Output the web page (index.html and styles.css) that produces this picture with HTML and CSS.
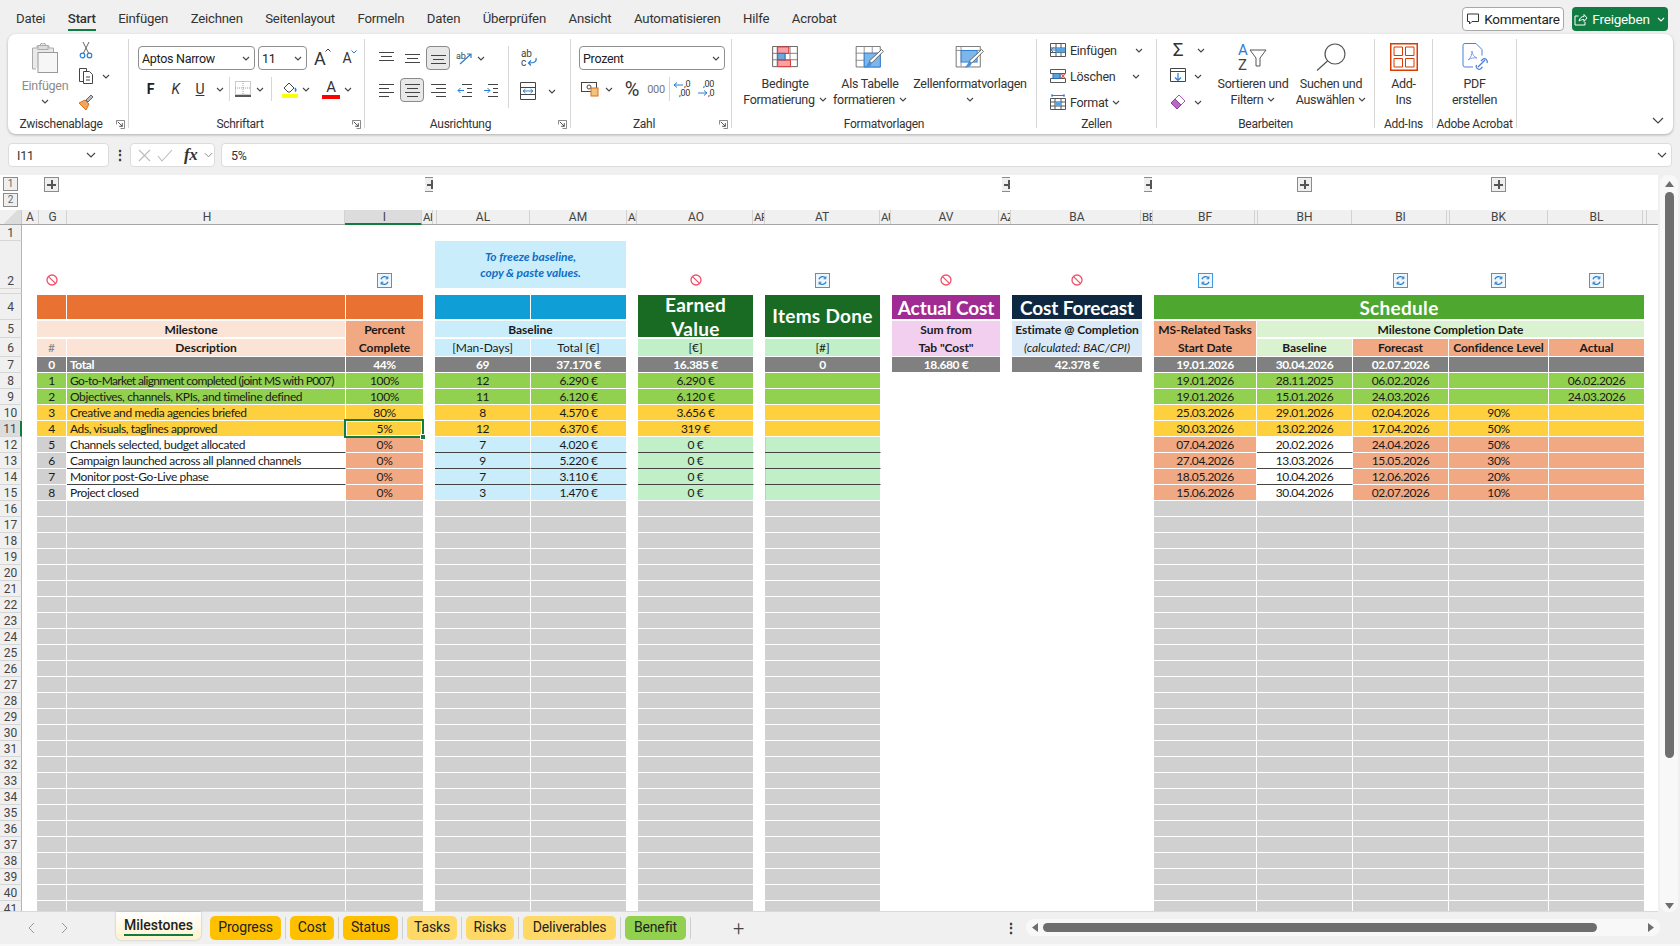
FILE: index.html
```html
<!DOCTYPE html>
<html lang="de">
<head>
    <meta charset="UTF-8">
    <title>Milestones - Excel</title>
    <link rel="stylesheet" href="styles.css">
</head>
<body>
    <svg class="defs" width="0" height="0">
        <symbol id="chev" viewBox="0 0 8 5"><path d="M1 1l3 3 3-3" fill="none" stroke="#444" stroke-width="1.1"/></symbol>
        <symbol id="ban" viewBox="0 0 12 12"><circle cx="6" cy="6" r="5" fill="#fff" stroke="#f0506a" stroke-width="1.3"/><path d="M2.6 2.6l6.8 6.8" stroke="#f0506a" stroke-width="1.3"/></symbol>
        <symbol id="sync" viewBox="0 0 15 15"><rect x=".5" y=".5" width="14" height="14" fill="#eef6fd" stroke="#3a9ae6"/><path d="M4 6.2A3.8 3.8 0 0 1 10.6 5M11 8.8A3.8 3.8 0 0 1 4.4 10" fill="none" stroke="#2f7fc4" stroke-width="1.3"/><path d="M10.9 3.4v2.4H8.6M4.1 11.6V9.2h2.3" fill="none" stroke="#2f7fc4"/></symbol>
        <symbol id="launch" viewBox="0 0 10 10"><path d="M.5 5V.5H9.5V9.5H5" fill="none" stroke="#777"/><path d="M2 2l5 5M7 3.5V7H3.5" fill="none" stroke="#444"/></symbol>
    </svg>

    <!-- Menue -->
    <header class="menubar">
        <nav class="menu">
            <span>Datei</span>
            <span class="current">Start</span>
            <span>Einfügen</span>
            <span>Zeichnen</span>
            <span>Seitenlayout</span>
            <span>Formeln</span>
            <span>Daten</span>
            <span>Überprüfen</span>
            <span>Ansicht</span>
            <span>Automatisieren</span>
            <span>Hilfe</span>
            <span>Acrobat</span>
        </nav>
        <button class="btn-comment">
            <svg width="14" height="14" viewBox="0 0 14 14"><path d="M1.5 2h11v7.5H6L3.5 12V9.5h-2z" fill="none" stroke="#333"/></svg>
            Kommentare
        </button>
        <button class="btn-share">
            <svg width="15" height="15" viewBox="0 0 15 15"><path d="M5.5 4H2v9h10v-3M6 9c.5-3 2.5-4.5 5-4.5V2.500l3 3.500-3 3.500V7.500C9 7.500 7.500 8 6 9z" fill="none" stroke="#fff"/></svg>
            Freigeben
            <svg class="chev" width="8" height="5"><use href="#chev"/></svg>
        </button>
    </header>

    <!-- Ribbon -->
    <section class="ribbon">
        <div class="group g-clip">
            <div class="group-body">
                <div class="paste">
                    <svg width="28" height="30" viewBox="0 0 28 30"><path d="M5 26H1.500V5H6V3h3a3 3 0 0 1 6 0h3v2h4.500v4" fill="#e9e9e9" stroke="#aaa"/><rect x="7" y="9.500" width="19.500" height="20" fill="#f6f6f6" stroke="#999"/><rect x="7" y="2.500" width="10" height="4" fill="#ddd" stroke="#aaa"/></svg>
                    <span class="muted">Einfügen</span>
                    <svg class="chev-under" width="8" height="5"><use href="#chev"/></svg>
                </div>
                <div class="stack">
                    <div class="stack-row">
                        <svg width="16" height="18" viewBox="0 0 16 18"><path d="M5 1l5.500 11M11 1L5.500 12" stroke="#666" fill="none"/><circle cx="4.500" cy="14.500" r="2.300" fill="none" stroke="#2b7cd3" stroke-width="1.200"/><circle cx="11.500" cy="14.500" r="2.300" fill="none" stroke="#2b7cd3" stroke-width="1.200"/></svg>
                    </div>
                    <div class="stack-row">
                        <svg width="16" height="18" viewBox="0 0 16 18"><path d="M5 14.500H1.500V1.500h7V4" fill="none" stroke="#444"/><path d="M5.500 4.500h6l3 3v9h-9z" fill="#fff" stroke="#444"/><path d="M8 10h4M8 13h4" stroke="#444"/></svg>
                        <svg class="chev" width="8" height="5"><use href="#chev"/></svg>
                    </div>
                    <div class="stack-row">
                        <svg width="17" height="18" viewBox="0 0 17 18"><path d="M1 10l6-3 4 4-3 6z" fill="#f2a65a" stroke="#d9701c"/><path d="M8 7l5-5 2 2-5 5z" fill="#bbb" stroke="#666"/></svg>
                    </div>
                </div>
            </div>
            <div class="group-label"><i></i><span>Zwischenablage</span><svg class="launcher" width="9" height="9"><use href="#launch"/></svg></div>
        </div>

        <div class="group g-font">
            <div class="group-body column">
                <div class="tool-row">
                    <div class="combo combo-font">Aptos Narrow<svg width="8" height="5"><use href="#chev"/></svg></div>
                    <div class="combo combo-size">11<svg width="8" height="5"><use href="#chev"/></svg></div>
                    <span class="grow">A<svg width="6" height="4" viewBox="0 0 6 4"><path d="M.5 3.500L3 1l2.500 2.500" fill="none" stroke="#444"/></svg></span>
                    <span class="shrink">A<svg width="6" height="4" viewBox="0 0 6 4"><path d="M.5.500L3 3 5.500.500" fill="none" stroke="#2b7cd3"/></svg></span>
                </div>
                <div class="tool-row row-two">
                    <span class="tb w25 t-bold">F</span>
                    <span class="tb w25 t-ital">K</span>
                    <span class="tb w24 t-under">U</span>
                    <svg class="chev" width="8" height="5"><use href="#chev"/></svg>
                    <i class="vsep v1"></i>
                    <span class="tb w18"><svg width="16" height="16" viewBox="0 0 16 16"><path d="M.5.500h15v13H.5z" fill="none" stroke="#999" stroke-dasharray="1 1"/><path d="M8 0v14M0 7h16" stroke="#999" stroke-dasharray="1 1"/><path d="M0 15h16" stroke="#222" stroke-width="1.500"/></svg></span>
                    <svg class="chev" width="8" height="5"><use href="#chev"/></svg>
                    <i class="vsep v2"></i>
                    <span class="tb w16"><svg width="16" height="18" viewBox="0 0 16 18"><path d="M2 8l5-5 5 5-4 4H6z" fill="#fff" stroke="#444"/><path d="M13 8c1 1.500 1.500 2.500 0 3.500" fill="none" stroke="#2b7cd3" stroke-width="1.500"/><rect y="14" width="16" height="4" fill="#ffff00"/></svg></span>
                    <svg class="chev" width="8" height="5"><use href="#chev"/></svg>
                    <span class="tb w18 fcolor">A</span>
                    <svg class="chev" width="8" height="5"><use href="#chev"/></svg>
                </div>
            </div>
            <div class="group-label"><i></i><span>Schriftart</span><svg class="launcher" width="9" height="9"><use href="#launch"/></svg></div>
        </div>

        <div class="group g-align">
            <div class="group-body">
                <div class="align-block">
                    <div class="tool-row">
                        <span class="tb al"><svg width="15" height="12" viewBox="0 0 15 12"><path d="M0 .5h15M2 4.500h11M0 8.500h15" stroke="#444"/></svg></span>
                        <span class="tb al"><svg width="15" height="12" viewBox="0 0 15 12"><path d="M0 2.500h15M2 6.500h11M0 10.500h15" stroke="#444"/></svg></span>
                        <span class="tb al active"><svg width="15" height="12" viewBox="0 0 15 12"><path d="M0 3.500h15M2 7.500h11M0 11.500h15" stroke="#444"/></svg></span>
                        <span class="tb al"><svg width="18" height="16" viewBox="0 0 18 16"><path d="M5 14L16 4M12 4h4v4" fill="none" stroke="#2b7cd3" stroke-width="1.200"/><text x="1" y="9" class="svg-t rot">ab</text></svg></span>
                        <svg class="chev tight" width="8" height="5"><use href="#chev"/></svg>
                    </div>
                    <div class="tool-row row-two2">
                        <span class="tb al"><svg width="15" height="14" viewBox="0 0 15 14"><path d="M0 1.500h15M0 5.500h10M0 9.500h15M0 13.500h10" stroke="#444"/></svg></span>
                        <span class="tb al active"><svg width="15" height="14" viewBox="0 0 15 14"><path d="M0 1.500h15M2 5.500h11M0 9.500h15M2 13.500h11" stroke="#444"/></svg></span>
                        <span class="tb al"><svg width="15" height="14" viewBox="0 0 15 14"><path d="M0 1.500h15M5 5.500h10M0 9.500h15M5 13.500h10" stroke="#444"/></svg></span>
                        <span class="tb al"><svg width="15" height="14" viewBox="0 0 15 14"><path d="M5 1.500h10M10 5.500h5M10 9.500h5M5 13.500h10" stroke="#444"/><path d="M7 7.500H1M3.500 5L1 7.500 3.500 10" fill="none" stroke="#2b7cd3"/></svg></span>
                        <span class="tb al"><svg width="15" height="14" viewBox="0 0 15 14"><path d="M5 1.500h10M10 5.500h5M10 9.500h5M5 13.500h10" stroke="#444"/><path d="M1 7.500h6M4.500 5L7 7.500 4.500 10" fill="none" stroke="#2b7cd3"/></svg></span>
                    </div>
                </div>
                <i class="vsep v3"></i>
                <div class="wrap-block">
                    <svg width="18" height="18" viewBox="0 0 18 18"><text x="1" y="8" class="svg-t">ab</text><text x="1" y="17" class="svg-t">c</text><path d="M16 9c1 4-2 5-7 5M11 11.500L8.500 14l2.500 2.500" fill="none" stroke="#2b7cd3" stroke-width="1.200"/></svg>
                    <div class="merge">
                        <svg width="16" height="18" viewBox="0 0 16 18"><path d="M.5.500h15v17H.5zM0 5.500h16M0 12.500h16" fill="none" stroke="#444"/><path d="M3 9h10M5.500 7L3 9l2.500 2M10.500 7L13 9l-2.500 2" fill="none" stroke="#2b7cd3"/></svg>
                        <svg class="chev" width="8" height="5"><use href="#chev"/></svg>
                    </div>
                </div>
            </div>
            <div class="group-label"><i></i><span>Ausrichtung</span><svg class="launcher" width="9" height="9"><use href="#launch"/></svg></div>
        </div>

        <div class="group g-num">
            <div class="group-body column">
                <div class="tool-row">
                    <div class="combo combo-num">Prozent<svg width="8" height="5"><use href="#chev"/></svg></div>
                </div>
                <div class="tool-row row-two">
                    <span class="tb w22"><svg width="18" height="16" viewBox="0 0 18 16"><rect x=".5" y="1.500" width="15" height="9" fill="#fff" stroke="#444"/><circle cx="8" cy="6" r="2" fill="none" stroke="#444"/><rect x="10" y="7" width="7" height="8" fill="#f4c27a" stroke="#d9701c"/></svg></span>
                    <svg class="chev" width="8" height="5"><use href="#chev"/></svg>
                    <span class="tb w24 pct">%</span>
                    <span class="tb w24 thou">000</span>
                    <i class="vsep v4"></i>
                    <span class="tb w24"><svg width="20" height="18" viewBox="0 0 20 18"><text x="11" y="7" class="svg-s">,0</text><text x="6" y="16" class="svg-s">,00</text><path d="M10 5H1M4 2.500L1 5l3 2.500" fill="none" stroke="#2b7cd3"/></svg></span>
                    <span class="tb w24"><svg width="20" height="18" viewBox="0 0 20 18"><text x="6" y="7" class="svg-s">,00</text><text x="11" y="16" class="svg-s">,0</text><path d="M1 13h9M7 10.500l3 2.500-3 2.500" fill="none" stroke="#2b7cd3"/></svg></span>
                </div>
            </div>
            <div class="group-label"><i></i><span>Zahl</span><svg class="launcher" width="9" height="9"><use href="#launch"/></svg></div>
        </div>

        <div class="group g-styles">
            <div class="group-body">
                <div class="big w90">
                    <svg class="big-icon cond" width="28" height="24" viewBox="0 0 28 24"><path d="M.5.500h27v22H.5z" fill="#fff" stroke="#555"/><path d="M5.500 0v23M19.500 0v23M.5 8h27M.5 15h27M14 0v23" stroke="#777"/><path d="M6 1h12v7H6zM6 15.500h14V22.500H6z" fill="#f8a0a8" stroke="#d93025"/><rect x="6" y="8" width="8" height="7" fill="#6fa8dc" stroke="#2b6cb0"/></svg>
                    <span>Bedingte</span>
                    <span>Formatierung<svg class="chev near" width="8" height="5"><use href="#chev"/></svg></span>
                </div>
                <div class="big w80">
                    <svg class="big-icon low" width="32" height="28" viewBox="0 0 32 28"><path d="M.5.500h27v23H.5z" fill="#fff" stroke="#666"/><path d="M9.500 0v23M18.500 0v23M0 8h27M0 16h27" stroke="#888"/><rect x="9.500" y="8" width="18" height="15.500" fill="#7db7ea" stroke="#2b7cd3"/><path d="M29 4l2 2-13 13-3-2z" fill="#fff" stroke="#555"/><path d="M15 17l3 2c-1 4-4 5-8 5 2-1 3-4 5-7z" fill="#4a90d9"/></svg>
                    <span>Als Tabelle</span>
                    <span>formatieren<svg class="chev near" width="8" height="5"><use href="#chev"/></svg></span>
                </div>
                <div class="big w120">
                    <svg class="big-icon low" width="32" height="28" viewBox="0 0 32 28"><path d="M.5.500h27v23H.5z" fill="#fff" stroke="#666"/><path d="M0 5h27M6 0v23" stroke="#888"/><rect x="6" y="5" width="18" height="13" fill="#7db7ea" stroke="#2b7cd3"/><path d="M29 4l2 2-13 13-3-2z" fill="#fff" stroke="#555"/><path d="M15 17l3 2c-1 4-4 5-8 5 2-1 3-4 5-7z" fill="#4a90d9"/></svg>
                    <span>Zellenformatvorlagen</span>
                    <svg class="chev-under" width="8" height="5"><use href="#chev"/></svg>
                </div>
            </div>
            <div class="group-label center"><span>Formatvorlagen</span></div>
        </div>

        <div class="group g-cells">
            <div class="group-body column cells-list">
                <div class="cell-row r93">
                    <svg width="16" height="14" viewBox="0 0 16 14"><path d="M.5.500h15v13H.5zM0 5h16M0 9.500h16M6 0v14M11 0v14" fill="#fff" stroke="#555"/><rect x="6" y="5" width="9" height="4.500" fill="#5ba3e0"/><path d="M7 7H1M3.500 4.500L1 7l2.500 2.500" fill="none" stroke="#2b7cd3"/></svg>
                    <span>Einfügen</span>
                    <svg class="chev push" width="8" height="5"><use href="#chev"/></svg>
                </div>
                <div class="cell-row r90">
                    <svg width="16" height="14" viewBox="0 0 16 14"><path d="M.5.500h15v4h-15zM.5 9.500h15v4h-15zM4 4v6M10 4v6" fill="#fff" stroke="#555"/><rect x="3" y="4.500" width="7" height="5" fill="#5ba3e0" stroke="#2b6cb0"/><path d="M11 4.500l4 5M15 4.500l-4 5" stroke="#e0453a" stroke-width="1.200"/></svg>
                    <span>Löschen</span>
                    <svg class="chev push" width="8" height="5"><use href="#chev"/></svg>
                </div>
                <div class="cell-row">
                    <svg width="16" height="16" viewBox="0 0 16 16"><path d="M1.500 1.500h13M2 0v3M14 0v3" stroke="#2b7cd3"/><path d="M.5 4.500h15v11H.5zM0 8h16M0 12h16M5 4v12M11 4v12" fill="#fff" stroke="#555"/><rect x="5" y="8" width="6" height="4" fill="#5ba3e0"/></svg>
                    <span>Format</span>
                    <svg class="chev flush" width="8" height="5"><use href="#chev"/></svg>
                </div>
            </div>
            <div class="group-label center"><span>Zellen</span></div>
        </div>

        <div class="group g-edit">
            <div class="group-body">
                <div class="stack edit-stack">
                    <div class="stack-row wide">
                        <span class="sigma">Σ</span>
                        <svg class="chev" width="8" height="5"><use href="#chev"/></svg>
                    </div>
                    <div class="stack-row">
                        <svg width="16" height="16" viewBox="0 0 16 16"><path d="M.5.500h15v13H.5zM0 3.500h16" fill="#fff" stroke="#444"/><path d="M8 5v7M5 9.500L8 12.500l3-3" fill="none" stroke="#2b7cd3" stroke-width="1.200"/></svg>
                        <svg class="chev" width="8" height="5"><use href="#chev"/></svg>
                    </div>
                    <div class="stack-row">
                        <svg width="16" height="16" viewBox="0 0 16 16"><path d="M1 9l8-8 6 6-8 8z" fill="#fff" stroke="#a855b5"/><path d="M1 9l4-4 6 6-4 4z" fill="#b56ac4" stroke="#8b3fa0"/></svg>
                        <svg class="chev" width="8" height="5"><use href="#chev"/></svg>
                    </div>
                </div>
                <div class="big w72">
                    <svg class="big-icon" width="30" height="28" viewBox="0 0 30 28"><text x="0" y="12" class="svg-a">A</text><text x="0" y="27" class="svg-z">Z</text><path d="M12 7h16l-6 8v8h-4v-8z" fill="#fff" stroke="#555"/></svg>
                    <span>Sortieren und</span>
                    <span>Filtern<svg class="chev near" width="8" height="5"><use href="#chev"/></svg></span>
                </div>
                <div class="big w76">
                    <svg class="big-icon" width="30" height="28" viewBox="0 0 30 28"><circle cx="19" cy="11" r="10" fill="#fff" stroke="#555" stroke-width="1.200"/><path d="M11.500 18L1 27.500" stroke="#555" stroke-width="1.200"/></svg>
                    <span>Suchen und</span>
                    <span>Auswählen<svg class="chev near" width="8" height="5"><use href="#chev"/></svg></span>
                </div>
            </div>
            <div class="group-label center"><span>Bearbeiten</span></div>
        </div>

        <div class="group g-addin">
            <div class="group-body centered">
                <div class="big">
                    <svg class="big-icon" width="28" height="28" viewBox="0 0 28 28"><path d="M.75.750h26.500v26.500H.75z" fill="#fff" stroke="#d83b01" stroke-width="1.500"/><path d="M4 4h8.500v8.500H4zM15.500 4H24v8.500h-8.500zM4 15.500h8.500V24H4zM15.500 15.500H24V24h-8.500z" fill="#fff" stroke="#d83b01"/></svg>
                    <span>Add-</span>
                    <span>Ins</span>
                </div>
            </div>
            <div class="group-label center"><span>Add-Ins</span></div>
        </div>

        <div class="group g-pdf">
            <div class="group-body centered">
                <div class="big">
                    <svg class="big-icon" width="28" height="28" viewBox="0 0 28 28"><path d="M12 24H4a2 2 0 0 1-2-2V2.500A2 2 0 0 1 4 .5h11l6 6v6" fill="#fff" stroke="#4a7fdc"/><path d="M7 17c3-2 4-6 4-9 0 3 2 6 5 7-3-.5-6 0-9 2z" fill="none" stroke="#7aa2e6"/><path d="M17 24l7-7M15.500 22a3 3 0 0 0 4 4l2-2M26 20a3 3 0 0 0-4-4l-2 2" fill="none" stroke="#4a7fdc" stroke-width="1.300"/></svg>
                    <span>PDF</span>
                    <span>erstellen</span>
                </div>
            </div>
            <div class="group-label center"><span>Adobe Acrobat</span></div>
        </div>

        <svg class="ribbon-toggle" width="12" height="7" viewBox="0 0 12 7"><path d="M1 1l5 5 5-5" fill="none" stroke="#444" stroke-width="1.200"/></svg>
    </section>

    <!-- Bearbeitungsleiste -->
    <div class="formula-bar">
        <div class="fbox namebox"><span>I11</span><svg width="10" height="6" viewBox="0 0 10 6"><path d="M1 1l4 4 4-4" fill="none" stroke="#444" stroke-width="1.100"/></svg></div>
        <span class="fdots">⋮</span>
        <div class="fbox fbuttons">
            <svg width="13" height="13" viewBox="0 0 13 13"><path d="M1 1l11 11M12 1L1 12" stroke="#bbb" stroke-width="1.100"/></svg>
            <svg width="16" height="13" viewBox="0 0 16 13"><path d="M1 7l4 5L15 1" fill="none" stroke="#bbb" stroke-width="1.100"/></svg>
            <span class="fx">fx</span>
            <svg width="9" height="6" viewBox="0 0 10 6"><path d="M1 1l4 4 4-4" fill="none" stroke="#888" stroke-width="1.100"/></svg>
        </div>
        <div class="fbox finput"><span>5%</span><svg width="10" height="6" viewBox="0 0 10 6"><path d="M1 1l4 4 4-4" fill="none" stroke="#444" stroke-width="1.100"/></svg></div>
    </div>

    <!-- Tabelle -->
    <div class="sheet-area">
        <div class="sheet">
            <div class="outline">
                <div class="levels">
                    <span class="lvl">1</span>
                    <span class="lvl">2</span>
                </div>
                <span class="plus p1"></span>
                <span class="plus cut p2"></span>
                <span class="plus cut p3"></span>
                <span class="plus cut p4"></span>
                <span class="plus p5"></span>
                <span class="plus p6"></span>
            </div>
            <div class="colhead">
                <span class="corner"></span>
                <span class="ch np ch17">A</span>
                <span class="ch np ch28">G</span>
                <span class="ch ch278">H</span>
                <span class="ch ch77 sel">I</span>
                <span class="ch clip ch11">AK</span>
                <span class="ch np ch4"></span>
                <span class="ch np ch93">AL</span>
                <span class="ch np ch97">AM</span>
                <span class="ch clip ch10">AN</span>
                <span class="ch ch116">AO</span>
                <span class="ch clip ch12">AP</span>
                <span class="ch np ch115">AT</span>
                <span class="ch clip ch11">AU</span>
                <span class="ch ch108">AV</span>
                <span class="ch clip ch12">AZ</span>
                <span class="ch ch130">BA</span>
                <span class="ch clip ch12">BE</span>
                <span class="ch ch102">BF</span>
                <span class="ch np ch3"></span>
                <span class="ch np ch94">BH</span>
                <span class="ch ch95">BI</span>
                <span class="ch np ch3"></span>
                <span class="ch np ch98">BK</span>
                <span class="ch ch95">BL</span>
                <span class="ch np ch4"></span>
                <span class="ch rest"></span>
            </div>
            <div class="grid-clip">
                <table class="grid">
                    <colgroup>
                        <col class="c22"><col class="c15"><col class="c30"><col class="c279"><col class="c78"><col class="c11">
                        <col class="c96"><col class="c96"><col class="c11"><col class="c116"><col class="c11"><col class="c116">
                        <col class="c11"><col class="c109"><col class="c11"><col class="c131"><col class="c11"><col class="c103">
                        <col class="c96"><col class="c96"><col class="c100"><col class="c96"><col class="c13">
                    </colgroup>
                    <tr class="r1"><th>1</th><td colspan="22"></td></tr>
                    <tr class="r2">
                        <th>2</th><td></td>
                        <td class="ico"><svg class="ban-ic" width="12" height="12"><use href="#ban"/></svg></td><td></td>
                        <td class="ico"><svg width="15" height="15"><use href="#sync"/></svg></td><td></td>
                        <td colspan="2" class="note">To freeze baseline,<br>copy &amp; paste values.</td><td></td>
                        <td class="ico"><svg class="ban-ic" width="12" height="12"><use href="#ban"/></svg></td><td></td>
                        <td class="ico"><svg width="15" height="15"><use href="#sync"/></svg></td><td></td>
                        <td class="ico"><svg class="ban-ic" width="12" height="12"><use href="#ban"/></svg></td><td></td>
                        <td class="ico"><svg class="ban-ic" width="12" height="12"><use href="#ban"/></svg></td><td></td>
                        <td class="ico"><svg width="15" height="15"><use href="#sync"/></svg></td><td></td>
                        <td class="ico"><svg width="15" height="15"><use href="#sync"/></svg></td>
                        <td class="ico"><svg width="15" height="15"><use href="#sync"/></svg></td>
                        <td class="ico"><svg width="15" height="15"><use href="#sync"/></svg></td><td></td>
                    </tr>
                    <tr class="r3"><th></th><td colspan="22"></td></tr>
                    <tr class="r4">
                        <th>4</th><td></td>
                        <td class="orange"></td><td class="orange"></td><td class="orange"></td><td></td>
                        <td class="blue"></td><td class="blue"></td><td></td>
                        <td rowspan="2" class="dgreen title span"><div class="two-line">Earned<br>Value</div></td><td></td>
                        <td rowspan="2" class="dgreen title span">Items Done</td><td></td>
                        <td class="purple title tight-t">Actual Cost</td><td></td>
                        <td class="navy title tight-t">Cost Forecast</td><td></td>
                        <td colspan="5" class="sgreen title">Schedule</td><td></td>
                    </tr>
                    <tr class="r5">
                        <th>5</th><td></td>
                        <td colspan="2" class="peach b">Milestone</td><td class="dpeach b join">Percent</td><td></td>
                        <td colspan="2" class="lblue b">Baseline</td><td></td>
                        <td></td>
                        <td></td>
                        <td class="lpurple b join">Sum from</td><td></td>
                        <td class="lsteel b join">Estimate @ Completion</td><td></td>
                        <td class="dpeach b join">MS-Related Tasks</td>
                        <td colspan="4" class="lsgreen b">Milestone Completion Date</td><td></td>
                    </tr>
                    <tr class="r6">
                        <th>6</th><td></td>
                        <td class="peach hash">#</td><td class="peach b">Description</td><td class="dpeach b top0">Complete</td><td></td>
                        <td class="lblue">[Man-Days]</td><td class="lblue">Total [€]</td><td></td>
                        <td class="lgreen">[€]</td><td></td>
                        <td class="lgreen">[#]</td><td></td>
                        <td class="lpurple b top0">Tab "Cost"</td><td></td>
                        <td class="lsteel it top0">(calculated: BAC/CPI)</td><td></td>
                        <td class="dpeach b top0">Start Date</td>
                        <td class="lsgreen b">Baseline</td>
                        <td class="dpeach b">Forecast</td>
                        <td class="dpeach b">Confidence Level</td>
                        <td class="dpeach b">Actual</td><td></td>
                    </tr>
                    <tr class="total">
                        <th>7</th><td class="nf"></td>
                        <td>0</td><td class="tl">Total</td><td>44%</td><td class="nf"></td>
                        <td>69</td><td>37.170 €</td><td class="nf"></td>
                        <td>16.385 €</td><td class="nf"></td>
                        <td>0</td><td class="nf"></td>
                        <td>18.680 €</td><td class="nf"></td>
                        <td>42.378 €</td><td class="nf"></td>
                        <td>19.01.2026</td><td>30.04.2026</td><td>02.07.2026</td><td></td><td></td><td class="nf"></td>
                    </tr>
                    <tr class="green">
                        <th>8</th><td class="nf"></td>
                        <td>1</td><td class="tl squeeze">Go-to-Market alignment completed (joint MS with P007)</td><td>100%</td><td class="nf"></td>
                        <td>12</td><td>6.290 €</td><td class="nf"></td>
                        <td>6.290 €</td><td class="nf"></td>
                        <td></td><td colspan="5" class="nf"></td>
                        <td>19.01.2026</td><td>28.11.2025</td><td>06.02.2026</td><td></td><td>06.02.2026</td><td class="nf"></td>
                    </tr>
                    <tr class="green">
                        <th>9</th><td class="nf"></td>
                        <td>2</td><td class="tl">Objectives, channels, KPIs, and timeline defined</td><td>100%</td><td class="nf"></td>
                        <td>11</td><td>6.120 €</td><td class="nf"></td>
                        <td>6.120 €</td><td class="nf"></td>
                        <td></td><td colspan="5" class="nf"></td>
                        <td>19.01.2026</td><td>15.01.2026</td><td>24.03.2026</td><td></td><td>24.03.2026</td><td class="nf"></td>
                    </tr>
                    <tr class="amber">
                        <th>10</th><td class="nf"></td>
                        <td>3</td><td class="tl">Creative and media agencies briefed</td><td>80%</td><td class="nf"></td>
                        <td>8</td><td>4.570 €</td><td class="nf"></td>
                        <td>3.656 €</td><td class="nf"></td>
                        <td></td><td colspan="5" class="nf"></td>
                        <td>25.03.2026</td><td>29.01.2026</td><td>02.04.2026</td><td>90%</td><td></td><td class="nf"></td>
                    </tr>
                    <tr class="amber row-sel">
                        <th>11</th><td class="nf"></td>
                        <td>4</td><td class="tl">Ads, visuals, taglines approved</td><td class="selected">5%<i class="handle"></i></td><td class="nf"></td>
                        <td>12</td><td>6.370 €</td><td class="nf"></td>
                        <td>319 €</td><td class="nf"></td>
                        <td></td><td colspan="5" class="nf"></td>
                        <td>30.03.2026</td><td>13.02.2026</td><td>17.04.2026</td><td>50%</td><td></td><td class="nf"></td>
                    </tr>
                    <tr class="open">
                        <th>12</th><td></td>
                        <td class="grey">5</td><td class="tl line">Channels selected, budget allocated</td><td class="dpeach">0%</td><td></td>
                        <td class="lblue line">7</td><td class="lblue line">4.020 €</td><td></td>
                        <td class="lgreen line">0 €</td><td></td>
                        <td class="lgreen line edge"></td><td colspan="5"></td>
                        <td class="dpeach">07.04.2026</td><td class="line">20.02.2026</td><td class="dpeach">24.04.2026</td><td class="dpeach">50%</td><td class="dpeach"></td><td></td>
                    </tr>
                    <tr class="open">
                        <th>13</th><td></td>
                        <td class="grey">6</td><td class="tl line">Campaign launched across all planned channels</td><td class="dpeach">0%</td><td></td>
                        <td class="lblue line">9</td><td class="lblue line">5.220 €</td><td></td>
                        <td class="lgreen line">0 €</td><td></td>
                        <td class="lgreen line edge"></td><td colspan="5"></td>
                        <td class="dpeach">27.04.2026</td><td class="line">13.03.2026</td><td class="dpeach">15.05.2026</td><td class="dpeach">30%</td><td class="dpeach"></td><td></td>
                    </tr>
                    <tr class="open">
                        <th>14</th><td></td>
                        <td class="grey">7</td><td class="tl line">Monitor post-Go-Live phase</td><td class="dpeach">0%</td><td></td>
                        <td class="lblue line">7</td><td class="lblue line">3.110 €</td><td></td>
                        <td class="lgreen line">0 €</td><td></td>
                        <td class="lgreen line edge"></td><td colspan="5"></td>
                        <td class="dpeach">18.05.2026</td><td class="line">10.04.2026</td><td class="dpeach">12.06.2026</td><td class="dpeach">20%</td><td class="dpeach"></td><td></td>
                    </tr>
                    <tr class="open">
                        <th>15</th><td></td>
                        <td class="grey">8</td><td class="tl">Project closed</td><td class="dpeach">0%</td><td></td>
                        <td class="lblue">3</td><td class="lblue">1.470 €</td><td></td>
                        <td class="lgreen">0 €</td><td></td>
                        <td class="lgreen edge"></td><td colspan="5"></td>
                        <td class="dpeach">15.06.2026</td><td>30.04.2026</td><td class="dpeach">02.07.2026</td><td class="dpeach">10%</td><td class="dpeach"></td><td></td>
                    </tr>
                    <tr>
                        <th>16</th><td rowspan="26"></td>
                        <td rowspan="26" class="run"></td><td rowspan="26" class="run"></td><td rowspan="26" class="run"></td><td rowspan="26"></td>
                        <td rowspan="26" class="run"></td><td rowspan="26" class="run"></td><td rowspan="26"></td>
                        <td rowspan="26" class="run"></td><td rowspan="26"></td>
                        <td rowspan="26" class="run"></td><td rowspan="26" colspan="5"></td>
                        <td rowspan="26" class="run"></td><td rowspan="26" class="run"></td><td rowspan="26" class="run"></td><td rowspan="26" class="run"></td><td rowspan="26" class="run"></td><td rowspan="26"></td>
                    </tr>
                    <tr><th>17</th></tr><tr><th>18</th></tr><tr><th>19</th></tr><tr><th>20</th></tr>
                    <tr><th>21</th></tr><tr><th>22</th></tr><tr><th>23</th></tr><tr><th>24</th></tr>
                    <tr><th>25</th></tr><tr><th>26</th></tr><tr><th>27</th></tr><tr><th>28</th></tr>
                    <tr><th>29</th></tr><tr><th>30</th></tr><tr><th>31</th></tr><tr><th>32</th></tr>
                    <tr><th>33</th></tr><tr><th>34</th></tr><tr><th>35</th></tr><tr><th>36</th></tr>
                    <tr><th>37</th></tr><tr><th>38</th></tr><tr><th>39</th></tr><tr><th>40</th></tr>
                    <tr><th>41</th></tr>
                </table>
            </div>
        </div>
        <div class="vscroll">
            <svg width="9" height="6" viewBox="0 0 9 6"><path d="M4.500 0L9 6H0z" fill="#6e6e6e"/></svg>
            <div class="vthumb"></div>
            <svg class="vdown" width="9" height="6" viewBox="0 0 9 6"><path d="M4.500 6L9 0H0z" fill="#6e6e6e"/></svg>
        </div>
    </div>

    <!-- Blattregister -->
    <footer class="tabbar">
        <div class="tab-nav">
            <svg width="7" height="12" viewBox="0 0 7 12"><path d="M6 1L1 6l5 5" fill="none" stroke="#999"/></svg>
            <svg width="7" height="12" viewBox="0 0 7 12"><path d="M1 1l5 5-5 5" fill="none" stroke="#999"/></svg>
        </div>
        <div class="tabs">
            <span class="tab active">Milestones</span>
            <span class="tab strong w71">Progress</span><i></i>
            <span class="tab strong w44">Cost</span><i></i>
            <span class="tab strong w55">Status</span><i></i>
            <span class="tab soft w50">Tasks</span><i></i>
            <span class="tab soft w48">Risks</span><i></i>
            <span class="tab soft w93">Deliverables</span><i></i>
            <span class="tab lime w61">Benefit</span><i></i>
            <span class="tab-add">+</span>
        </div>
        <span class="tab-dots">⋮</span>
        <div class="hscroll">
            <svg width="6" height="9" viewBox="0 0 6 9"><path d="M0 4.500L6 0v9z" fill="#6e6e6e"/></svg>
            <div class="hthumb"></div>
            <svg width="6" height="9" viewBox="0 0 6 9"><path d="M6 4.500L0 0v9z" fill="#6e6e6e"/></svg>
        </div>
    </footer>
    <div class="statusline"></div>
</body>
</html>
```

FILE: styles.css
```css
* {
    box-sizing: border-box;
}

body {
    margin: 0;
    width: 1680px;
    height: 946px;
    overflow: hidden;
    background: #f0f0f0;
    font-family: Roboto, "Noto Sans", sans-serif;
    font-size: 12.5px;
    letter-spacing: -.27px;
    color: #333;
}

.defs {
    position: absolute;
}

svg {
    flex: none;
}

/* Menue */
.menubar {
    height: 34px;
    display: flex;
    align-items: center;
    padding: 4px 12px 0 16px;
}

.menu {
    display: flex;
    gap: 22.5px;
    flex: 1;
    font-size: 13.2px;
    letter-spacing: -.2px;
}

.menu span {
    line-height: 20px;
    position: relative;
}

.menu .current {
    font-weight: 500;
}

.menu .current::after {
    content: '';
    position: absolute;
    left: 0;
    right: 0;
    bottom: -2px;
    height: 2px;
    background: #107c41;
}

.btn-comment,
.btn-share {
    height: 24px;
    display: flex;
    align-items: center;
    justify-content: center;
    gap: 4px;
    font: inherit;
    font-size: 13.5px;
    letter-spacing: -.2px;
    border-radius: 4px;
    padding: 0;
}

.btn-comment {
    width: 102px;
    background: #fff;
    border: 1px solid #a8a8a8;
    color: #222;
}

.btn-share {
    width: 96px;
    margin-left: 8px;
    background: #107c41;
    border: 0;
    color: #fff;
}

.btn-share .chev {
    margin-left: 3px;
    filter: brightness(0) invert(1);
}

/* Ribbon */
.ribbon {
    height: 100px;
    margin: 0 7px 0 8px;
    padding: 5px 0 6px;
    display: flex;
    background: #fff;
    border-radius: 8px;
    box-shadow: 0 1px 3px rgba(0,0,0,0.28);
}

.group {
    display: flex;
    flex-direction: column;
    border-right: 1px solid #d6d6d6;
    height: 89px;
}

.group-body {
    flex: 1;
    display: flex;
    min-height: 0;
}

.group-body.column {
    flex-direction: column;
}

.group-body.centered {
    justify-content: center;
}

.group-label {
    display: grid;
    grid-template-columns: 1fr auto 1fr;
    align-items: center;
    height: 16px;
    line-height: 16px;
    margin-bottom: -4px;
    padding-right: 14px;
    font-size: 12px;
    white-space: nowrap;
    text-align: center;
}

.group-label.center {
    display: block;
    padding-right: 0;
}

.launcher {
    justify-self: end;
    margin-right: -11px;
}

.g-clip { width: 121px; }
.g-font { width: 236px; padding-left: 9px; }
.g-align { width: 206px; padding-left: 8px; }
.g-num { width: 161px; padding-left: 8px; }
.g-styles { width: 305px; padding-left: 8px; }
.g-cells { width: 120px; }
.g-edit { width: 218px; }
.g-addin { width: 58px; }
.g-pdf { width: 84px; }

.g-font .group-label,
.g-align .group-label,
.g-num .group-label,
.g-styles .group-label {
    margin-left: -8px;
}

.paste {
    width: 62px;
    margin-left: 6px;
    padding-top: 4px;
    display: flex;
    flex-direction: column;
    align-items: center;
}

.paste span {
    margin-top: 5px;
    line-height: 16px;
}

.muted {
    color: #8c8c8c;
}

.chev-under {
    display: block;
    margin: 5px auto 0;
}

.stack {
    display: flex;
    flex-direction: column;
    gap: 8px;
    padding-top: 2px;
    margin-left: 2px;
}

.stack-row {
    height: 18px;
    display: flex;
    align-items: center;
}

.chev {
    margin-left: 4px;
    margin-right: 2px;
}

.stack-row .chev {
    margin-left: 8px;
}

.tool-row {
    display: flex;
    align-items: center;
    margin-top: 7px;
    height: 24px;
}

.row-two {
    margin-top: 8px;
    height: 22px;
}

.row-two2 {
    margin-top: 8px;
}

.combo {
    height: 24px;
    border: 1px solid #8f8f8f;
    border-radius: 4px;
    display: flex;
    align-items: center;
    justify-content: space-between;
    padding: 0 4px 0 3px;
    font-size: 12.5px;
    letter-spacing: -.3px;
    color: #222;
    background: #fff;
}

.combo-font { width: 117px; }
.combo-size { width: 49px; margin-left: 3px; }
.combo-num { width: 146px; }

.grow {
    margin-left: 7px;
    font-size: 18px;
    display: flex;
}

.shrink {
    margin-left: 11px;
    font-size: 14px;
    display: flex;
}

.tb {
    display: flex;
    align-items: center;
    justify-content: center;
    height: 22px;
    flex: none;
}

.w16 { width: 16px; }
.w18 { width: 18px; }
.w22 { width: 22px; }
.w24 { width: 24px; }
.w25 { width: 25px; }
.w26 { width: 26px; }

.t-bold { font-weight: 700; font-size: 14px; color: #222; }
.t-ital { font-style: italic; font-size: 14px; }
.t-under { text-decoration: underline; font-size: 14px; }

.fcolor {
    font-size: 15px;
    line-height: 16px;
    border-bottom: 4px solid #ff0000;
    height: 19px;
    margin-left: 10px;
}

.vsep {
    width: 1px;
    height: 24px;
    background: #d6d6d6;
    flex: none;
}

.v1 { margin: 0 4px 0 3px; }
.v2 { margin: 0 10px 0 5px; }
.v3 { height: 62px; margin: 7px 0 0 0; }
.v4 { margin: 0 1px; }

.align-block {
    width: 135px;
}

.tb.al {
    width: 24px;
    height: 24px;
    margin: 0 1px;
}

.tb.active {
    background: #e8e8e8;
    border: 1px solid #8a8a8a;
    border-radius: 4px;
}

.chev.tight {
    margin-left: 0;
}

.wrap-block {
    padding: 10px 0 0 11px;
    display: flex;
    flex-direction: column;
    gap: 15px;
}

.merge {
    display: flex;
    align-items: center;
}

.merge .chev {
    margin-left: 12px;
}

.pct {
    font-size: 20px;
    margin-left: 5px;
}

.thou {
    font-size: 11px;
    color: #777;
}

.svg-t { font-size: 10px; fill: #444; }
.svg-s { font-size: 9px; fill: #333; }
.svg-a { font-size: 15px; fill: #2b7cd3; }
.svg-z { font-size: 15px; fill: #444; }
.rot { font-size: 9px; }

.big {
    display: flex;
    flex-direction: column;
    align-items: center;
    padding-top: 4px;
    line-height: 16px;
    white-space: nowrap;
}

.big-icon {
    height: 28px;
    margin-bottom: 5px;
}

.big-icon.low {
    height: 25px;
    margin-top: 3px;
}

.big-icon.cond {
    height: 22px;
    margin-top: 3px;
    margin-bottom: 8px;
}

.big .chev-under {
    margin-top: 5px;
}

.w72 { width: 72px; }
.w76 { width: 76px; margin-left: 4px; }
.w80 { width: 80px; }
.w90 { width: 90px; }
.w120 { width: 120px; }

.chev.near {
    margin: 0 0 2px 4px;
}

.chev.flush {
    margin-left: 0;
}

.cells-list {
    padding: 2px 0 0 13px;
    gap: 8px;
}

.cell-row {
    height: 18px;
    display: flex;
    align-items: center;
    gap: 4px;
}

.r93 { width: 93px; }
.r90 { width: 90px; }

.push {
    margin-left: auto;
    margin-right: 0;
}

.edit-stack {
    margin-left: 13px;
    width: 47px;
}

.sigma {
    font-size: 19px;
    line-height: 18px;
    width: 16px;
    text-align: center;
}

.stack-row.wide .chev {
    margin-left: 11px;
}

.ribbon-toggle {
    margin: auto 9px 4px auto;
}

/* Bearbeitungsleiste */
.formula-bar {
    height: 24px;
    margin: 9px 8px 8px;
    display: flex;
    align-items: center;
}

.fbox {
    height: 24px;
    background: #fff;
    border: 1px solid #dcdcdc;
    border-radius: 4px;
    display: flex;
    align-items: center;
}

.namebox {
    width: 101px;
    padding: 0 12px 0 8px;
    justify-content: space-between;
}

.fdots {
    width: 21px;
    text-align: center;
    font-size: 14px;
    font-weight: 700;
}

.fbuttons {
    width: 85px;
    padding: 0 1px 0 7px;
    justify-content: space-between;
}

.fx {
    font-family: "Liberation Serif", serif;
    font-style: italic;
    font-size: 17px;
    font-weight: 700;
    margin-left: 4px;
    color: #333;
}

.finput {
    flex: 1;
    margin-left: 6px;
    padding: 0 4px 0 9px;
    justify-content: space-between;
}

/* Tabelle */
.sheet-area {
    display: flex;
    height: 737px;
}

.sheet {
    width: 1658px;
    background: #fff;
    border-bottom: 1px solid #d9d9d9;
}

.outline {
    height: 35px;
    display: flex;
    padding-top: 2px;
    background: #fff;
}

.levels {
    display: flex;
    flex-direction: column;
    gap: 2px;
    padding-left: 3px;
    width: 17px;
}

.lvl {
    width: 15px;
    height: 14px;
    border: 1px solid #8c8c8c;
    background: #efefef;
    font-size: 10px;
    line-height: 12px;
    text-align: center;
    color: #666;
}

.plus {
    width: 15px;
    height: 15px;
    border: 1px solid #8c8c8c;
    background: linear-gradient(#555, #555) center / 9px 2px no-repeat,
                linear-gradient(#555, #555) center / 2px 9px no-repeat,
                #efefef;
}

.plus.cut {
    width: 8px;
    border-width: 1px 0;
    background-position: 2px center, 6px center, 0 0;
}

.p1 { margin-left: 27px; }
.p2 { margin-left: 366px; }
.p3 { margin-left: 569px; }
.p4 { margin-left: 134px; }
.p5 { margin-left: 145px; }
.p6 { margin-left: 179px; }

.colhead {
    height: 15px;
    display: flex;
    background: #f0f0f0;
    border-bottom: 1px solid #a6a6a6;
    font-size: 12px;
    line-height: 14px;
    letter-spacing: 0;
    color: #444;
}

.corner {
    width: 22px;
    background: linear-gradient(135deg, #f0f0f0 50%, #dcdcdc 50%);
    border-right: 1px solid #c8c8c8;
    flex: none;
}

.ch {
    flex: none;
    text-align: center;
    border-right: 1px solid #d2d2d2;
    overflow: hidden;
    white-space: nowrap;
    padding-left: 3px;
}

.ch.np {
    padding-left: 0;
}

.ch.clip {
    text-align: left;
    padding-left: 1px;
    font-size: 11.5px;
    letter-spacing: -.5px;
}

.ch.sel {
    background: #dcdcdc;
    border-bottom: 2px solid #107c41;
    height: 15px;
}

.ch.rest {
    flex: 1;
    border-right: 0;
}

.ch3 { width: 3px; }
.ch4 { width: 4px; }
.ch10 { width: 10px; }
.ch11 { width: 11px; }
.ch12 { width: 12px; }
.ch17 { width: 17px; }
.ch28 { width: 28px; }
.ch77 { width: 77px; }
.ch93 { width: 93px; }
.ch94 { width: 94px; }
.ch95 { width: 95px; }
.ch97 { width: 97px; }
.ch98 { width: 98px; }
.ch102 { width: 102px; }
.ch108 { width: 108px; }
.ch115 { width: 115px; }
.ch116 { width: 116px; }
.ch130 { width: 130px; }
.ch278 { width: 278px; }

.grid-clip {
    height: 686px;
    overflow: hidden;
}

.grid {
    table-layout: fixed;
    width: 1658px;
    border-collapse: separate;
    border-spacing: 0;
    font-family: Lato, Roboto, sans-serif;
    font-size: 12px;
    color: #1a1a1a;
    letter-spacing: -.05px;
}

.c11 { width: 11px; }
.c13 { width: 13px; }
.c15 { width: 15px; }
.c22 { width: 22px; }
.c30 { width: 30px; }
.c78 { width: 78px; }
.c96 { width: 96px; }
.c100 { width: 100px; }
.c103 { width: 103px; }
.c109 { width: 109px; }
.c116 { width: 116px; }
.c131 { width: 131px; }
.c279 { width: 279px; }

.grid tr {
    height: 16px;
}

.total, .green, .amber, .open {
    letter-spacing: -.38px;
}

.grid td.squeeze {
    letter-spacing: -.64px;
}

.grid th {
    font-family: Roboto, sans-serif;
    font-weight: 400;
    font-size: 12px;
    line-height: 14px;
    letter-spacing: 0;
    color: #444;
    background: #f0f0f0;
    padding: 1px 0 0;
    border-right: 1px solid #b4b4b4;
    border-bottom: 1px solid #d6d6d6;
}

.grid td {
    padding: 0;
    line-height: 15px;
    text-align: center;
    white-space: nowrap;
    overflow: hidden;
    border-right: 1px solid #fff;
    border-bottom: 1px solid #fff;
}

.grid td.tl {
    text-align: left;
    padding-left: 3px;
}

.grid tr.r1 { height: 16px; }
.grid tr.r2 { height: 48px; }
.grid tr.r3 { height: 5px; }
.grid tr.r4 { height: 26px; }
.grid tr.r5 { height: 18px; }
.grid tr.r6 { height: 19px; }

.r3 th, .r3 td {
    line-height: 3px;
}

.r2 th {
    vertical-align: bottom;
}

.grid .ico {
    vertical-align: bottom;
}

.ico svg {
    display: block;
    margin: 0 auto;
}

.ico .ban-ic {
    margin-bottom: 2px;
}

.grid .note {
    background: #caedfb;
    color: #0f6fc6;
    font-style: italic;
    font-weight: 700;
    font-size: 12px;
    line-height: 16px;
    padding-top: 1px;
}

.r4 td, .r5 td, .r6 td {
    border-top: 1px solid #fff;
    line-height: 16px;
}

.r4 th, .r5 th, .r6 th {
    vertical-align: middle;
}

.grid .r5 td:not(.join) {
    padding-top: 1px;
    line-height: 15px;
}

.grid td.top0 {
    border-top: 0;
    padding-top: 1px;
}

.grid .title {
    color: #fff;
    font-weight: 700;
    font-size: 19px;
    line-height: 22px;
    letter-spacing: .3px;
    padding-top: 2px;
}

.grid .title.span {
    padding-top: 0;
}

.grid .tight-t {
    letter-spacing: -.1px;
}

.two-line {
    height: 42px;
    line-height: 24px;
    padding-top: 1px;
    display: flex;
    align-items: center;
    justify-content: center;
}

.orange { background: #e97132; }
.blue { background: #0f9ed5; }
.dgreen { background: #196b24; }
.purple { background: #a02b93; }
.navy { background: #0e2841; }
.sgreen { background: #4ea72e; }
.peach { background: #fbe3d6; }
.dpeach { background: #f1a983; }
.lblue { background: #caedfb; }
.lgreen { background: #c1f0c8; }
.lpurple { background: #f2ceef; }
.lsteel { background: #dae9f8; }
.lsgreen { background: #daf2d0; }
.grey { background: #d0d0d0; }

.b { font-weight: 700; }
.it { font-style: italic; }

.grid .hash {
    color: #808080;
}

.grid td.join {
    border-bottom: 0;
}

.total td { background: #808080; color: #fff; font-weight: 700; }
tr.green td { background: #92d050; }
tr.amber td { background: #ffd03e; }
.grid tr td.nf { background: #fff; }

.grid td.line {
    border-bottom-color: #444;
}

.edge {
    box-shadow: inset 1px 0 0 #c8c8c8;
}

.run {
    background: repeating-linear-gradient(#d0d0d0 0 15px, #fff 15px 16px);
}

.row-sel th {
    background: #dcdcdc;
    border-right: 2px solid #107c41;
}

.grid td.selected {
    position: relative;
    overflow: visible;
}

.selected::after {
    content: '';
    position: absolute;
    left: -2px;
    right: -1px;
    top: -2px;
    bottom: -2px;
    border: 2px solid #107c41;
    box-shadow: inset 0 0 0 1px #fff;
}

.handle {
    position: absolute;
    right: -3px;
    bottom: -4px;
    width: 6px;
    height: 6px;
    background: #107c41;
    border: 1px solid #fff;
    z-index: 1;
}

/* Scrollbars */
.vscroll {
    width: 18px;
    margin: 0 2px;
    background: #f8f8f8;
    border-radius: 8px;
    display: flex;
    flex-direction: column;
    align-items: center;
    padding: 6px 0 3px;
}

.vthumb {
    width: 9px;
    height: 566px;
    margin-top: 5px;
    background: #6e6e6e;
    border-radius: 5px;
}

.vdown {
    margin-top: auto;
}

.tabbar {
    height: 32px;
    display: flex;
    align-items: flex-end;
    padding-bottom: 4px;
    font-size: 14px;
    letter-spacing: -.15px;
}

.tab-nav {
    width: 116px;
    height: 24px;
    display: flex;
    align-items: center;
    gap: 26px;
    padding-left: 28px;
    flex: none;
}

.tabs {
    width: 880px;
    display: flex;
    align-items: flex-end;
    flex: none;
}

.tabs i {
    width: 1px;
    height: 22px;
    margin: 0 4px 1px;
    background: #cfcfcf;
    flex: none;
}

.tab {
    height: 24px;
    line-height: 23px;
    text-align: center;
    border-radius: 5px;
    white-space: nowrap;
    color: #222;
    flex: none;
}

.tab.active {
    width: 85px;
    height: 28px;
    margin-right: 9px;
    line-height: 26px;
    font-weight: 500;
    letter-spacing: 0;
    background: linear-gradient(#fff, #fff2cc);
    border-radius: 0 0 6px 6px;
    box-shadow: 0 0 2px rgba(0,0,0,0.3);
    position: relative;
}

.tab.active::after {
    content: '';
    position: absolute;
    left: 8px;
    right: 8px;
    bottom: 4px;
    height: 2px;
    background: #107c41;
}

.strong { background: #ffc000; }
.soft { background: #ffd966; }
.lime { background: #92d050; }

.w44 { width: 44px; }
.w48 { width: 48px; }
.w50 { width: 50px; }
.w55 { width: 55px; }
.w61 { width: 61px; }
.w71 { width: 71px; }
.w93 { width: 93px; }

.tab-add {
    margin-left: 38px;
    font-size: 20px;
    line-height: 24px;
    font-weight: 300;
    color: #444;
}

.tab-dots {
    width: 30px;
    height: 24px;
    line-height: 24px;
    text-align: center;
    font-weight: 700;
    font-size: 14px;
    flex: none;
}

.hscroll {
    width: 634px;
    height: 17px;
    margin-bottom: 4px;
    background: #f8f8f8;
    border-radius: 8px;
    display: flex;
    align-items: center;
    justify-content: space-between;
    padding: 0 6px;
}

.hthumb {
    width: 554px;
    height: 9px;
    background: #6e6e6e;
    border-radius: 5px;
    margin-right: 46px;
}

.statusline {
    height: 2px;
    background: #f8f8f8;
}
```
